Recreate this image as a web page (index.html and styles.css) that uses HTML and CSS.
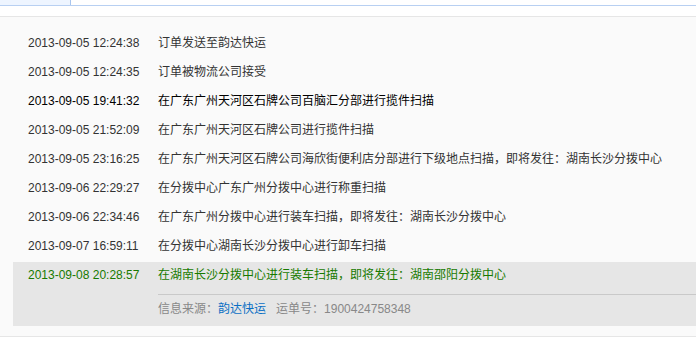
FILE: index.html
```html
<!DOCTYPE html>
<html lang="zh-CN">
<head>
<meta charset="utf-8">
<title>物流跟踪</title>
<link rel="stylesheet" href="styles.css">
</head>
<body>
<div class="tabs"><div class="tab"></div></div>
<div class="main">
  <ul class="track">
    <li class="row"><span class="time">2013-09-05 12:24:38</span><span class="desc">订单发送至韵达快运</span></li>
    <li class="row"><span class="time">2013-09-05 12:24:35</span><span class="desc">订单被物流公司接受</span></li>
    <li class="row dark"><span class="time">2013-09-05 19:41:32</span><span class="desc">在广东广州天河区石牌公司百脑汇分部进行揽件扫描</span></li>
    <li class="row"><span class="time">2013-09-05 21:52:09</span><span class="desc">在广东广州天河区石牌公司进行揽件扫描</span></li>
    <li class="row"><span class="time">2013-09-05 23:16:25</span><span class="desc">在广东广州天河区石牌公司海欣街便利店分部进行下级地点扫描，即将发往：湖南长沙分拨中心</span></li>
    <li class="row"><span class="time">2013-09-06 22:29:27</span><span class="desc">在分拨中心广东广州分拨中心进行称重扫描</span></li>
    <li class="row"><span class="time">2013-09-06 22:34:46</span><span class="desc">在广东广州分拨中心进行装车扫描，即将发往：湖南长沙分拨中心</span></li>
    <li class="row"><span class="time">2013-09-07 16:59:11</span><span class="desc">在分拨中心湖南长沙分拨中心进行卸车扫描</span></li>
    <li class="current">
      <div class="row latest"><span class="time">2013-09-08 20:28:57</span><span class="desc">在湖南长沙分拨中心进行装车扫描，即将发往：湖南邵阳分拨中心</span></div>
      <div class="source">信息来源：<a class="link" href="#">韵达快运</a><span class="waybill">运单号：1900424758348</span></div>
    </li>
  </ul>
</div>
</body>
</html>
```
FILE: styles.css
```css
html, body {
  margin: 0;
  padding: 0;
  background: #ffffff;
}

body {
  font-family: "Liberation Sans", "Noto Sans CJK SC", sans-serif;
  font-size: 12px;
  color: #333333;
}

.tabs {
  height: 5px;
  border-bottom: 1px solid #b8d0f2;
  display: flex;
}

.tab {
  width: 70px;
  height: 5px;
  background: #eef5ff;
  border-right: 1px solid #a8c5ee;
}

.main {
  margin-top: 10px;
  border-top: 1px solid #e6e6e6;
  border-bottom: 1px solid #e6e6e6;
  background: #fafafa;
  padding: 12px 0 10px;
}

.track {
  list-style: none;
  margin: 0 0 0 13px;
  padding: 0;
}

.row {
  display: flex;
  height: 29px;
  line-height: 29px;
  padding-left: 15px;
  white-space: nowrap;
}

.time {
  width: 130px;
  flex: none;
}

.dark {
  color: #000000;
}

.current {
  margin-top: 1px;
  background: #e6e6e6;
  padding-bottom: 3px;
}

.latest {
  height: 26px;
  line-height: 26px;
  color: #177a00;
}

.source {
  margin-left: 145px;
  margin-top: 6px;
  border-top: 1px solid #c9c9c9;
  line-height: 28px;
  height: 28px;
  color: #888888;
  white-space: nowrap;
}

.link {
  color: #0a6fc4;
  text-decoration: none;
}

.waybill {
  margin-left: 10px;
}
```
